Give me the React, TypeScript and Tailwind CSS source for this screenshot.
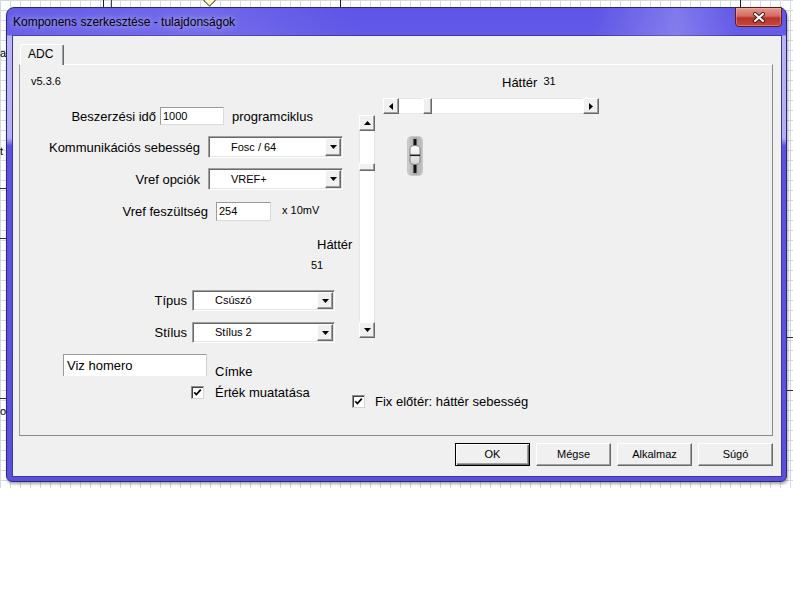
import React from "react";

const F = "font-['Liberation_Sans',Arial,sans-serif]";

function Tri({ dir }: { dir: "up" | "down" | "left" | "right" }) {
  if (dir === "up")
    return (
      <svg width="7" height="4" viewBox="0 0 7 4"><polygon points="0,4 7,4 3.5,0" fill="#000" /></svg>
    );
  if (dir === "down")
    return (
      <svg width="7" height="4" viewBox="0 0 7 4"><polygon points="0,0 7,0 3.5,4" fill="#000" /></svg>
    );
  if (dir === "left")
    return (
      <svg width="4" height="7" viewBox="0 0 4 7"><polygon points="4,0 4,7 0,3.5" fill="#000" /></svg>
    );
  return (
    <svg width="4" height="7" viewBox="0 0 4 7"><polygon points="0,0 0,7 4,3.5" fill="#000" /></svg>
  );
}

const raised =
  "bg-[#f0f0f0] border border-t-white border-l-white border-r-[#696969] border-b-[#696969] shadow-[inset_-1px_-1px_0_#a0a0a0]";
const sunken =
  "bg-white border border-t-[#a0a0a0] border-l-[#a0a0a0] border-r-white border-b-white shadow-[inset_1px_1px_0_#696969,inset_-1px_-1px_0_#e3e3e3]";
const edit =
  "bg-white border border-t-[#9a9a9a] border-l-[#9a9a9a] border-r-[#dadada] border-b-[#dadada]";

function Combo({ w, h, text }: { w: string; h: string; text: string }) {
  return (
    <div className={`${sunken} ${w} ${h} flex items-stretch p-[1px]`}>
      <div className="flex-1 flex items-center pl-[21px] text-[11px] leading-[13px] text-black">{text}</div>
      <div className={`${raised} w-[16px] flex items-center justify-center`}>
        <Tri dir="down" />
      </div>
    </div>
  );
}

function CheckBox() {
  return (
    <div className="w-[13px] h-[13px] bg-white border border-t-[#8a8a8a] border-l-[#8a8a8a] border-r-[#d4d4d4] border-b-[#d4d4d4] shadow-[inset_1px_1px_0_#404040] flex items-center justify-center">
      <svg width="9" height="9" viewBox="0 0 9 9">
        <path d="M1.2 4.2 L3.4 6.6 L7.8 1.6" stroke="#000" strokeWidth="1.7" fill="none" />
      </svg>
    </div>
  );
}

function Trackbar() {
  return (
    <svg width="16" height="40" viewBox="0 0 16 40">
      <defs>
        <linearGradient id="tbg" x1="0" y1="0" x2="1" y2="0">
          <stop offset="0" stopColor="#d0d0d0" />
          <stop offset="0.5" stopColor="#a8a8a8" />
          <stop offset="1" stopColor="#c4c4c4" />
        </linearGradient>
        <linearGradient id="thg" x1="0" y1="0" x2="0" y2="1">
          <stop offset="0" stopColor="#ffffff" />
          <stop offset="1" stopColor="#d4d4d4" />
        </linearGradient>
      </defs>
      <rect x="0.5" y="0.5" width="15" height="39" rx="4" fill="url(#tbg)" stroke="#c8c8c8" />
      <rect x="6.5" y="3" width="3" height="34" fill="#111" />
      <path d="M3 13 Q3 9.5 8 9.5 Q13 9.5 13 13 L13 25 Q13 28.5 8 28.5 Q3 28.5 3 25 Z" fill="url(#thg)" stroke="#808080" />
      <rect x="3" y="18.5" width="10" height="1.6" fill="#222" />
    </svg>
  );
}

function Btn({ label, def }: { label: string; def?: boolean }) {
  return (
    <div
      className={`w-[75px] h-[23px] flex items-center justify-center text-[11px] text-black ${
        def
          ? "bg-[#f0f0f0] border border-black shadow-[inset_1px_1px_0_white,inset_-1px_-1px_0_#696969,inset_-2px_-2px_0_#a0a0a0]"
          : raised
      }`}
    >
      {label}
    </div>
  );
}

function Window() {
  return (
    <div className="relative w-[781px] h-[475px] rounded-t-[8px] rounded-b-[6px] border border-[#2b2878] bg-[linear-gradient(to_bottom,#5d53e6_0px,#6259e8_27px,#b9b4f5_28px,#b4aef4_130px,#5c52df_138px,#5a50dc_100%)] flex flex-col shadow-[1px_2px_3px_rgba(0,0,0,0.35)]">
      {/* title bar */}
      <div className="relative h-[28px] flex items-center pl-[6px] rounded-t-[7px] bg-[linear-gradient(to_right,rgba(255,255,255,0.05)_0%,rgba(255,255,255,0.12)_25%,rgba(255,255,255,0)_45%,rgba(255,255,255,0)_75%,rgba(255,255,255,0.22)_86%,rgba(255,255,255,0.02)_94%)]">
        <span className="text-[12px] leading-[14px] text-black [text-shadow:0_0_6px_rgba(255,255,255,0.7)]">
          Komponens szerkesztése - tulajdonságok
        </span>
        <div className="absolute top-[-1px] right-[4px] w-[47px] h-[20px] rounded-b-[4px] border border-[#5a1c1c] bg-[linear-gradient(to_bottom,#e49a90_0%,#d46a5e_45%,#b8322a_55%,#c44a3a_100%)] shadow-[inset_0_0_0_1px_rgba(255,200,200,0.35)] flex items-center justify-center">
          <svg width="14" height="11" viewBox="0 0 14 11">
            <path d="M3 2 L11 9 M11 2 L3 9" stroke="#4a1010" strokeWidth="4" strokeLinecap="round" />
            <path d="M3 2 L11 9 M11 2 L3 9" stroke="#fff" strokeWidth="2.2" strokeLinecap="round" />
          </svg>
        </div>
      </div>

      {/* client area */}
      <div className="ml-[6px] w-[768px] h-[440px] bg-[#f0f0f0] shadow-[0_0_0_1px_#3d37a0] pt-[8px] pl-[6px] text-black">
        <div className="ml-[1px] w-[44px] h-[21px] relative z-10 -mb-px bg-[#f0f0f0] border-t border-l border-white border-r border-r-[#696969] shadow-[inset_-1px_0_0_#a0a0a0] rounded-t-[2px] text-[12px] leading-[14px] pl-[7px] pt-[2px]">
          ADC
        </div>
        <div className="w-[754px] h-[372px] border border-t-white border-l-[#a0a0a0] border-r-[#8a8a8a] border-b-[#8a8a8a]">
          {/* top section */}
          <div className="flex items-start">
            {/* left column */}
            <div className="w-[339px] flex flex-col">
              <div className="pt-[10px] pl-[11px] text-[11px] leading-[13px]">v5.3.6</div>
              <div className="mt-[19px] flex items-center h-[18px]">
                <div className="w-[136px] text-right text-[13px] leading-[15px]">Beszerzési idő</div>
                <div className={`${edit} ml-[4px] w-[64px] h-[18px] flex items-center pl-[2px] text-[11px]`}>1000</div>
                <div className="ml-[8px] text-[13px] leading-[15px]">programciklus</div>
              </div>
              <div className="mt-[11px] flex items-center h-[22px]">
                <div className="w-[180px] text-right text-[13px] leading-[15px]">Kommunikációs sebesség</div>
                <div className="ml-[8px]">
                  <Combo w="w-[135px]" h="h-[22px]" text="Fosc / 64" />
                </div>
              </div>
              <div className="mt-[10px] flex items-center h-[22px]">
                <div className="w-[180px] text-right text-[13px] leading-[15px]">Vref opciók</div>
                <div className="ml-[8px]">
                  <Combo w="w-[135px]" h="h-[22px]" text="VREF+" />
                </div>
              </div>
              <div className="mt-[12px] flex items-center h-[19px]">
                <div className="w-[188px] text-right text-[13px] leading-[15px]">Vref feszültség</div>
                <div className={`${edit} ml-[8px] w-[55px] h-[19px] flex items-center pl-[2px] text-[11px]`}>254</div>
                <div className="ml-[11px] text-[11px] leading-[13px] -mt-[2px]">x 10mV</div>
              </div>
              <div className="mt-[16px] pl-[297px] text-[13px] leading-[15px]">Háttér</div>
              <div className="mt-[7px] pl-[291px] text-[11px] leading-[13px]">51</div>
              <div className="mt-[18px] flex items-center h-[21px]">
                <div className="w-[167px] text-right text-[13px] leading-[15px]">Típus</div>
                <div className="ml-[5px]">
                  <Combo w="w-[143px]" h="h-[21px]" text="Csúszó" />
                </div>
              </div>
              <div className="mt-[11px] flex items-center h-[21px]">
                <div className="w-[167px] text-right text-[13px] leading-[15px]">Stílus</div>
                <div className="ml-[5px]">
                  <Combo w="w-[143px]" h="h-[21px]" text="Stílus 2" />
                </div>
              </div>
            </div>

            {/* vertical scrollbar */}
            <div className="mt-[50px] w-[16px] h-[223px] flex flex-col bg-white border-l border-r border-[#e6e6e6]">
              <div className={`${raised} h-[16px] flex items-center justify-center -mx-px`}>
                <Tri dir="up" />
              </div>
              <div className="h-[32px]" />
              <div className={`${raised} h-[8px] -mx-px`} />
              <div className="flex-1" />
              <div className={`${raised} h-[16px] flex items-center justify-center -mx-px`}>
                <Tri dir="down" />
              </div>
            </div>

            {/* right column */}
            <div className="pl-[8px] flex flex-col">
              <div className="pt-[10px] pl-[119px] h-[25px] flex items-start">
                <span className="text-[13px] leading-[15px]">Háttér</span>
                <span className="ml-[6px] text-[11px] leading-[13px]">31</span>
              </div>
              <div className="mt-[8px] w-[216px] h-[16px] flex bg-white border-t border-b border-[#e6e6e6]">
                <div className={`${raised} w-[16px] flex items-center justify-center -my-px`}>
                  <Tri dir="left" />
                </div>
                <div className="w-[24px]" />
                <div className={`${raised} w-[9px] -my-px`} />
                <div className="flex-1" />
                <div className={`${raised} w-[16px] flex items-center justify-center -my-px`}>
                  <Tri dir="right" />
                </div>
              </div>
              <div className="mt-[22px] ml-[24px]">
                <Trackbar />
              </div>
            </div>
          </div>

          {/* bottom section */}
          <div className="mt-[11px] flex items-start">
            <div className="ml-[43px] w-[144px] h-[22px] bg-white border-t border-l border-r border-t-[#9a9a9a] border-l-[#9a9a9a] border-r-[#cfcfcf] flex items-center pl-[3px] text-[13px] leading-[15px]">
              Viz homero
            </div>
            <div className="ml-[8px] mt-[10px] text-[13px] leading-[15px]">Címke</div>
          </div>
          <div className="mt-[6px] flex items-start">
            <div className="ml-[171px] w-[161px] flex items-center">
              <CheckBox />
              <span className="ml-[11px] text-[13px] leading-[15px]">Érték muatatása</span>
            </div>
            <div className="mt-[9px] flex items-center">
              <CheckBox />
              <span className="ml-[10px] text-[13px] leading-[15px]">Fix előtér: háttér sebesség</span>
            </div>
          </div>
        </div>

        {/* buttons */}
        <div className="mt-[7px] w-[754px] flex justify-end gap-[6px]">
          <Btn label="OK" def />
          <Btn label="Mégse" />
          <Btn label="Alkalmaz" />
          <Btn label="Súgó" />
        </div>
      </div>
    </div>
  );
}

export default function App() {
  return (
    <div className={`${F} w-[793px] h-[614px] bg-white overflow-hidden`}>
      <div className="relative h-[488px] pt-[7px] pl-[6px] bg-white bg-[linear-gradient(#d3dae5_1px,transparent_1px),linear-gradient(90deg,#d3dae5_1px,transparent_1px)] [background-size:10px_10px]">
        {/* canvas fragments behind the dialog */}
        <div className="absolute left-[103px] top-0 w-px h-[8px] bg-[#222]" />
        <div className="absolute left-[111px] top-0 w-px h-[8px] bg-[#444]" />
        <div className="absolute left-[340px] top-0 w-px h-[8px] bg-[#222]" />
        <div className="absolute left-[740px] top-0 w-px h-[8px] bg-[#222]" />
        <div className="absolute left-[205px] top-[-4px] w-[9px] h-[9px] rotate-45 bg-[#fff8c0] border border-[#555]" />
        <div className="absolute left-0 top-[47px] text-[11px] leading-[13px] text-black">a</div>
        <div className="absolute left-0 top-[145px] text-[11px] leading-[13px] text-black">t</div>
        <div className="absolute left-0 top-[188px] w-[7px] h-px bg-[#333]" />
        <div className="absolute left-0 top-[238px] w-[7px] h-px bg-[#333]" />
        <div className="absolute left-0 top-[398px] w-[7px] h-px bg-[#333]" />
        <div className="absolute left-0 top-[405px] text-[11px] leading-[13px] text-black">o</div>
        <div className="absolute left-[787px] top-[337px] w-[6px] h-px bg-[#333]" />
        <div className="absolute left-[787px] top-[390px] w-[6px] h-px bg-[#333]" />
        <div className="relative">
          <Window />
        </div>
      </div>
    </div>
  );
}
